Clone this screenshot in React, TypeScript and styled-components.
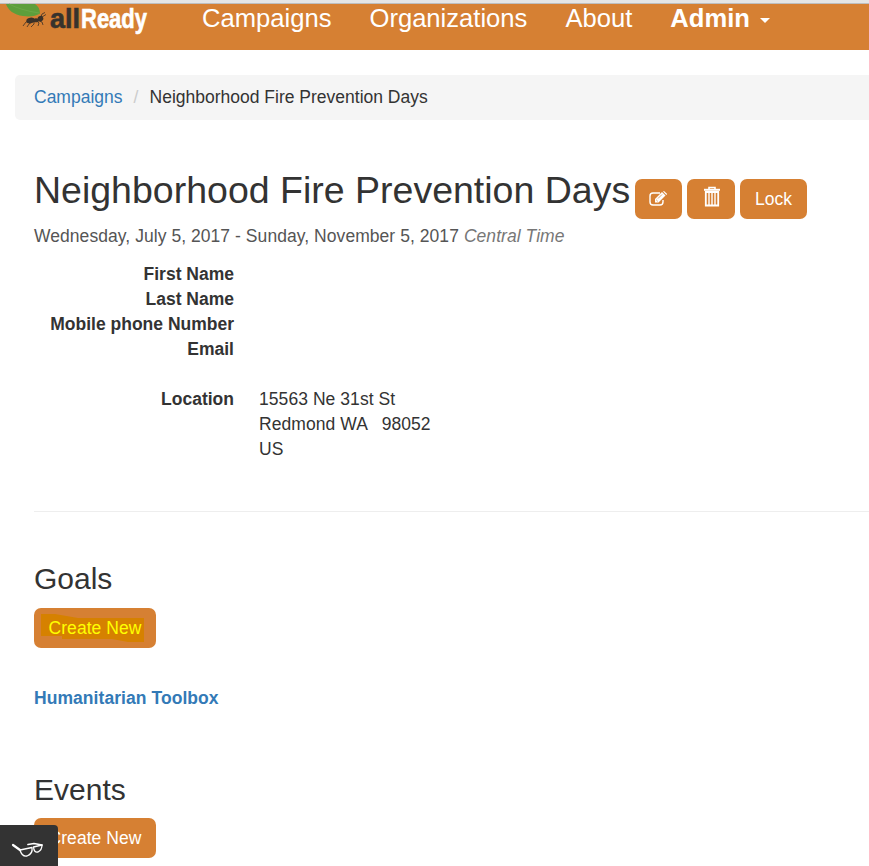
import React from 'react';
import styled, { createGlobalStyle } from 'styled-components';

const Global = createGlobalStyle`
  *, *::before, *::after { box-sizing: border-box; }
  html, body { margin: 0; overflow: hidden; }
  body { background: #fff; color: #333; font: 17.5px/25px "Liberation Sans", Arial, sans-serif; }
`;

const Page = styled.div`
  position: relative;
  height: 866px;
  overflow: hidden;
`;

const Navbar = styled.nav`
  height: 50px;
  display: flex;
  align-items: flex-start;
  background: #d68033;
  border-top: 3px solid #e5e5e5;
  box-shadow: inset 0 1px #bebebe;
`;

const Brand = styled.a`
  width: 202px;
  height: 44px;
`;

const Logo = styled.svg`
  display: block;
  overflow: visible;
  font-family: "Liberation Sans", Arial, sans-serif;
  font-weight: 700;
`;

const NavLinks = styled.div`
  display: flex;
  gap: 38px;
`;

const NavLink = styled.a<{ $bold?: boolean }>`
  display: flex;
  align-items: center;
  height: 30px;
  color: #fff;
  font-size: 25.6px;
  font-weight: ${(p) => (p.$bold ? 700 : 400)};
  white-space: nowrap;
`;

const Caret = styled.span`
  margin: 4px 0 0 10px;
  border: 5px solid transparent;
  border-top-color: #fff;
  border-bottom: 0;
`;

const Breadcrumb = styled.ol`
  display: flex;
  list-style: none;
  height: 45px;
  margin: 25px 0 0 15px;
  padding: 10px 19px;
  background: #f5f5f5;
  border-radius: 5px 0 0 5px;
`;

const Slash = styled.li`
  width: 27px;
  padding-left: 11px;
  color: #ccc;
`;

const Link = styled.a<{ $bold?: boolean }>`
  color: #337ab7;
  font-weight: ${(p) => (p.$bold ? 700 : 400)};
  letter-spacing: ${(p) => (p.$bold ? '0.06px' : 'normal')};
`;

const Content = styled.main`
  padding-left: 34px;
`;

const TitleRow = styled.div`
  display: flex;
  gap: 5px;
  padding-top: 50px;
  height: 104px;
`;

const Title = styled.h2`
  margin: 0;
  width: 596px;
  font-size: 37.5px;
  font-weight: 400;
  line-height: 41px;
  white-space: nowrap;
`;

const Button = styled.button<{ $width: number }>`
  position: relative;
  display: flex;
  align-items: center;
  justify-content: center;
  width: ${(p) => p.$width}px;
  height: 40px;
  padding: 0;
  border: 0;
  border-radius: 7px;
  background: #d68033;
  color: #fff;
  font: inherit;
`;

const TitleActions = styled.div`
  display: flex;
  gap: 5px;
  padding-top: 9px;
`;

const Dates = styled.div`
  color: #555;
  letter-spacing: 0.055px;
  em { color: #777; }
`;

const Details = styled.dl`
  display: grid;
  grid-template-columns: 200px 1fr;
  column-gap: 25px;
  grid-auto-rows: minmax(25px, auto);
  margin: 13px 0 0;
`;

const Term = styled.dt<{ $spaced?: boolean }>`
  grid-column: 1;
  margin-top: ${(p) => (p.$spaced ? 25 : 0)}px;
  text-align: right;
  font-weight: 700;
`;

const Value = styled.dd`
  margin: 25px 0 0;
  white-space: pre-line;
  letter-spacing: 0.06px;
`;

const Rule = styled.hr`
  margin: 49px 0 0;
  border: 0;
  border-top: 1px solid #eee;
`;

const Section = styled.section<{ $top: number }>`
  padding-top: ${(p) => p.$top}px;
`;

const SectionTitle = styled.h3<{ $gap: number }>`
  margin: 0 0 ${(p) => p.$gap}px;
  font-size: 30px;
  font-weight: 400;
  line-height: 33px;
`;

const Organization = styled.div`
  margin-top: 38px;
`;

const Marker = styled.svg`
  position: absolute;
  left: 7px;
  top: 6px;
`;

const Label = styled.span<{ $marked?: boolean }>`
  position: relative;
  letter-spacing: 0.05px;
  color: ${(p) => (p.$marked ? '#ff0' : '#fff')};
`;

const Glimpse = styled.div`
  position: absolute;
  left: 0;
  bottom: 0;
  width: 58px;
  height: 41px;
  background: #333;
  border-top-right-radius: 4px;
`;

const AllReadyLogo = () => (
  <Logo width="160" height="40" viewBox="0 3 160 40">
    <path d="M6 4C8 10 14 15 23 16C30 17 36 16 40 13.5C40 9 38 6 35 4Z" fill="#5d9e3b" />
    <path d="M9 4Q20 10 39 13" stroke="#6aa747" fill="none" />
    <g fill="#3b3128">
      <ellipse cx="30.5" cy="20.5" rx="4.2" ry="2.9" transform="rotate(-10 30.5 20.5)" />
      <ellipse cx="36" cy="20.3" rx="3" ry="2" />
      <ellipse cx="40.5" cy="18.7" rx="2.8" ry="2.7" transform="rotate(-30 40.5 18.7)" />
    </g>
    <path d="M31 21L26 22L23 26M33 21L29 24L27 27M34 21L34 24L31 27M36 20L39 23L38 26M37 20L42 22L43 25M41 17L42 14L45 12.5M42 17L46 14.5" stroke="#3b3128" strokeOpacity=".8" fill="none" />
    <text x="50" y="28" fontSize="27" fill="#37332d" stroke="#37332d" strokeWidth=".6" textLength="30" lengthAdjust="spacingAndGlyphs">all</text>
    <text x="81" y="28" fontSize="27" fill="#fff" stroke="#fff" strokeWidth=".6" textLength="66" lengthAdjust="spacingAndGlyphs">Ready</text>
  </Logo>
);

const EditIcon = () => (
  <svg width="19" height="16" viewBox="0 0 19 16" fill="none">
    <path d="M11 2H4Q1 2 1 5V11Q1 14 4 14H11Q14 14 14 11V9" stroke="#fff" strokeWidth="1.4" />
    <path d="M6 11.5V8L13 1L16.5 4.5L9.5 11.5Z" fill="#fff" />
    <path d="M14 0.5L15 0L18.2 3L17.3 4Z" fill="#fff" />
    <path d="M7.2 8.8L8.8 10.4M9 7.5L13 3.5" stroke="#d68033" strokeWidth=".7" />
  </svg>
);

const TrashIcon = () => (
  <svg width="18" height="22" viewBox="0 0 18 22" fill="none" stroke="#fff">
    <path d="M6 3V1.5H12V3" strokeWidth="1.6" />
    <path d="M1 3.8H17" strokeWidth="2" />
    <path d="M2.8 6H15.2V19.5H2.8Z" strokeWidth="1.8" />
    <path d="M6 6V19M9 6V19M12 6V19" strokeWidth="1.4" />
  </svg>
);

const TrashLift = styled.span`
  height: 26px;
  padding-left: 2px;
`;

export default function App() {
  return (
    <Page>
      <Global />
      <Navbar>
        <Brand><AllReadyLogo /></Brand>
        <NavLinks>
          <NavLink>Campaigns</NavLink>
          <NavLink>Organizations</NavLink>
          <NavLink>About</NavLink>
          <NavLink $bold>Admin <Caret /></NavLink>
        </NavLinks>
      </Navbar>
      <Breadcrumb>
        <li><Link>Campaigns</Link></li>
        <Slash>/</Slash>
        <li>Neighborhood Fire Prevention Days</li>
      </Breadcrumb>
      <Content>
        <TitleRow>
          <Title>Neighborhood Fire Prevention Days</Title>
          <TitleActions>
            <Button $width={47} aria-label="Edit"><EditIcon /></Button>
            <Button $width={48} aria-label="Delete"><TrashLift><TrashIcon /></TrashLift></Button>
            <Button $width={67}>Lock</Button>
          </TitleActions>
        </TitleRow>
        <Dates>Wednesday, July 5, 2017 - Sunday, November 5, 2017 <em>Central Time</em></Dates>
        <Details>
          <Term>First Name</Term>
          <Term>Last Name</Term>
          <Term>Mobile phone Number</Term>
          <Term>Email</Term>
          <Term $spaced>Location</Term>
          <Value>{'15563 Ne 31st St\nRedmond WA \u00a0 98052\nUS'}</Value>
        </Details>
        <Rule />
        <Section $top={50}>
          <SectionTitle $gap={13}>Goals</SectionTitle>
          <Button $width={122}>
            <Marker width="104" height="29" viewBox="0 0 104 29">
              <path d="M0 0H14L37 4H103V28H87L71 25H21V22H0Z" fill="#d68100" />
            </Marker>
            <Label $marked>Create New</Label>
          </Button>
          <Organization><Link $bold>Humanitarian Toolbox</Link></Organization>
        </Section>
        <Section $top={62}>
          <SectionTitle $gap={12}>Events</SectionTitle>
          <Button $width={122}><Label>Create New</Label></Button>
        </Section>
      </Content>
      <Glimpse>
        <svg width="58" height="41" viewBox="0 0 58 41" fill="none" stroke="#fff" strokeLinejoin="round" strokeLinecap="round">
          <path d="M13 20L20 25" strokeWidth="2.2" />
          <path d="M20 25L32 22.5Q33 29 27 31Q22 32 20 25ZM33.5 22L42 20Q42 25 38 27Q34 28 33.5 22" strokeWidth="1.3" />
          <path d="M28 19.5L34 18.5L42 20" strokeWidth="1.7" />
        </svg>
      </Glimpse>
    </Page>
  );
}
